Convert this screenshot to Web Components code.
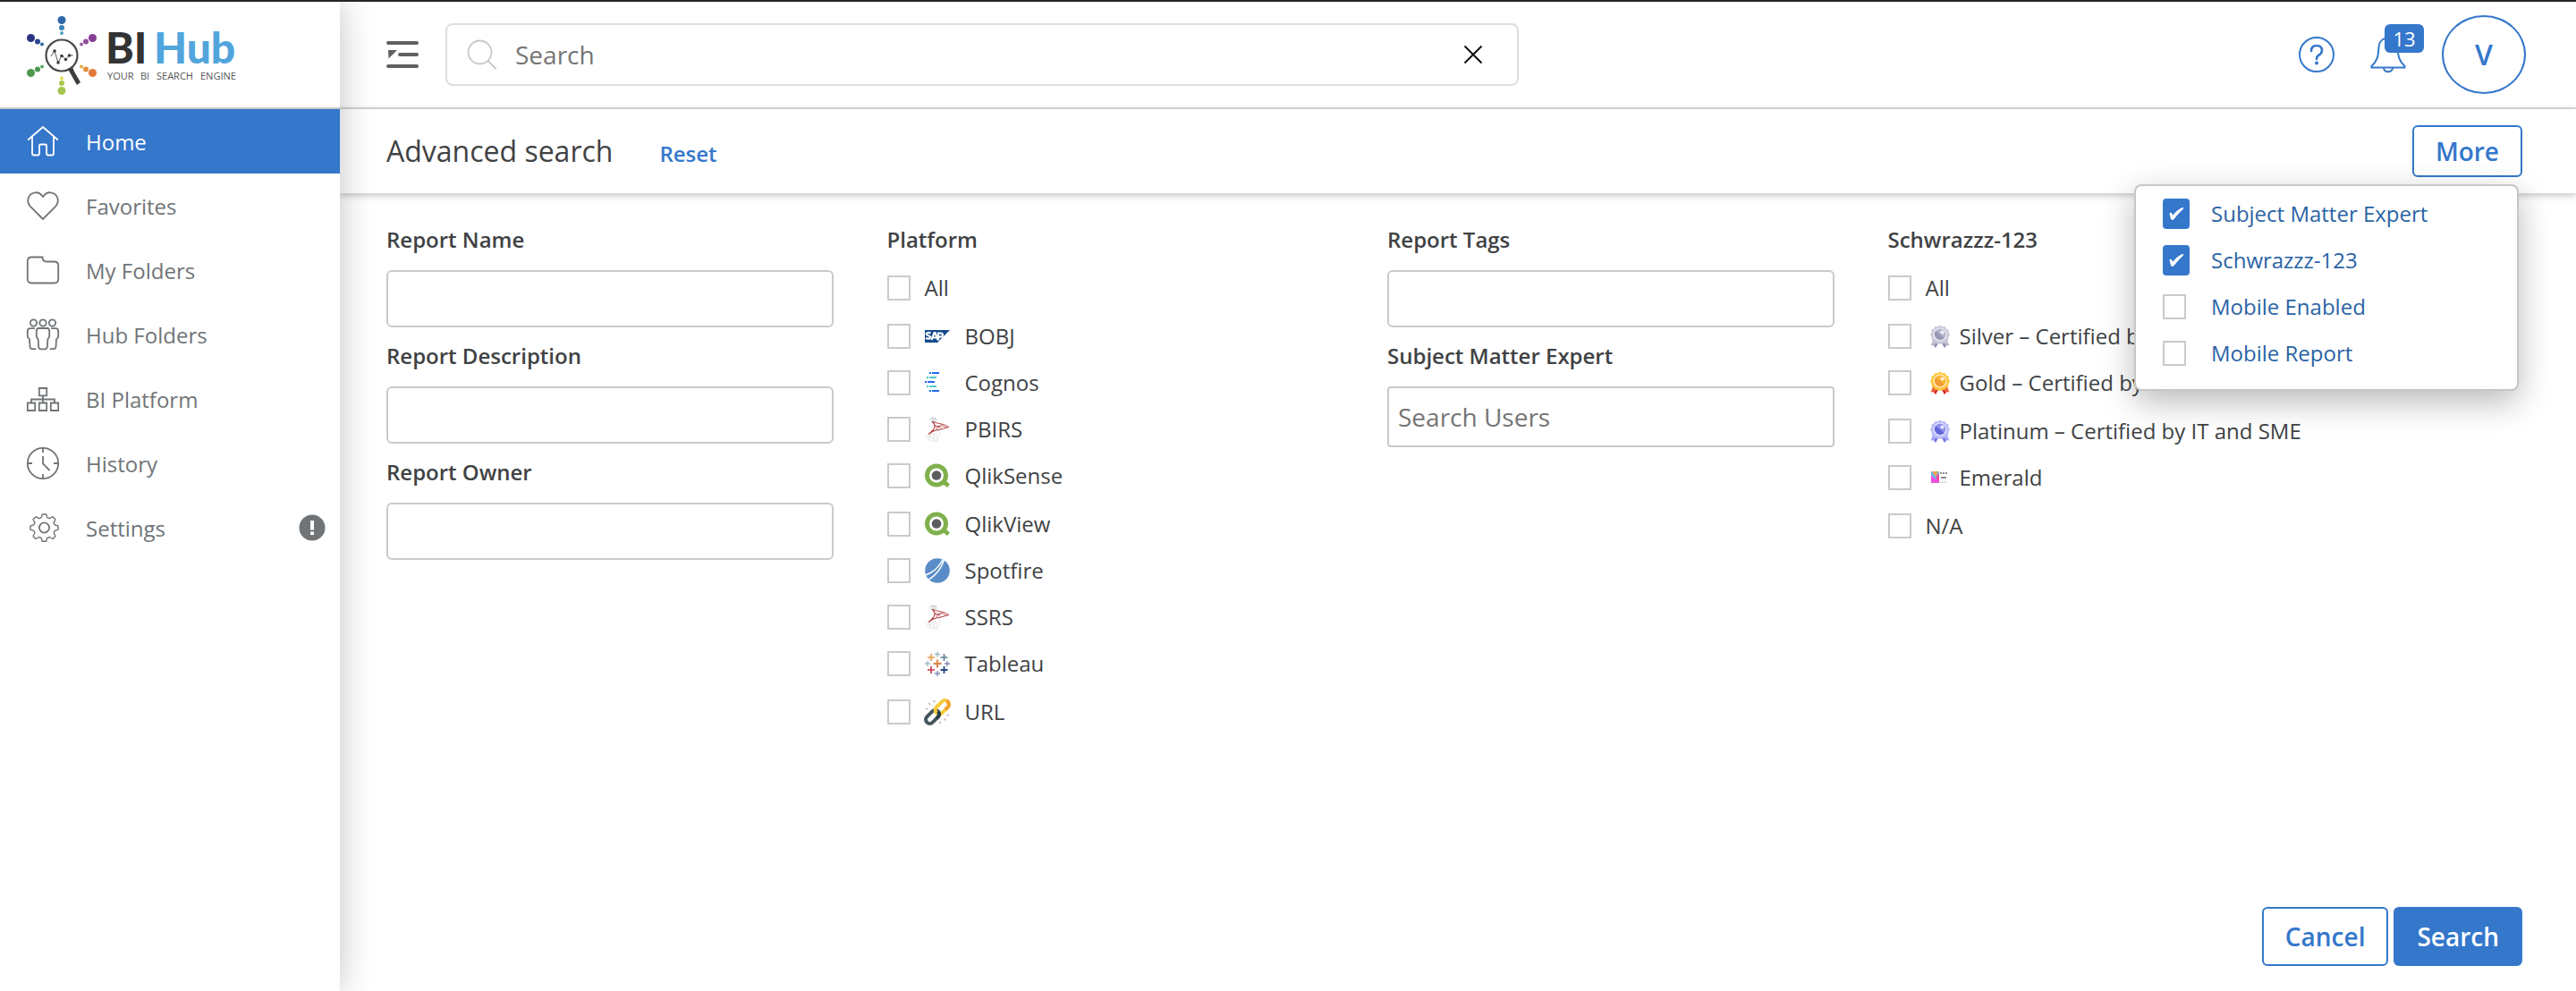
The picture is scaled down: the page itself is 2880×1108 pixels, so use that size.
<!DOCTYPE html>
<html lang="en">
<head>
<meta charset="utf-8">
<meta name="viewport" content="width=device-width, initial-scale=1">
<title>BI Hub</title>
<style>
  :root {
    --blue: #3477cb;
    --link: #2a63a5;
    --ink: #404244;
    --muted: #707477;
    --line: #cacaca;
  }
  body {
    margin: 0;
    background: #fff;
    color: var(--ink);
    font: 24px/32px "Open Sans", "Noto Sans", sans-serif;
  }
</style>
</head>
<body>
<bi-app></bi-app>

<script>
const define = (name, html, setup) => {
  const template = document.createElement('template');
  template.innerHTML = '<style>*,:host{box-sizing:border-box}:host{display:block}</style>' + html;
  customElements.define(name, class extends HTMLElement {
    constructor() {
      super();
      this.attachShadow({ mode: 'open' }).append(template.content.cloneNode(true));
    }
    connectedCallback() {
      if (setup) setup(this, this.shadowRoot);
    }
  });
};

const medal = (light, mid, dark, ribbon, ribbonDark) => `<svg viewBox="0 0 28 28">
  <path d="M7 16 3.500 24.500l3.200-.3L9 27l4-8zM21 16l3.500 8.500-3.200-.3L19 27l-4-8z" fill="${ribbon}"/>
  <path d="M10 20l-3 4.200L9 27l4-7zM18 20l3 4.200L19 27l-4-7z" fill="${ribbonDark}"/>
  <path d="M14 1.500l2.500 1.700 3-.3 1.300 2.700 2.800 1.200-.1 3 1.500 2.600-1.700 2.500.1 3-2.700 1.300-1.400 2.700-3-.1L14 23l-2.300-1.200-3 .1-1.400-2.700-2.700-1.300.1-3L3 12.400l1.500-2.600-.1-3 2.800-1.200 1.300-2.700 3 .3z" fill="${light}"/>
  <circle cx="14" cy="12" r="7" fill="${mid}" stroke="#fff" stroke-opacity=".8" stroke-width="1.200"/>
  <path d="M9 8a6.300 6.300 0 0 0 9.500 8z" fill="${dark}"/>
  <circle cx="16.500" cy="9.500" r="2" fill="#fff" opacity=".8"/></svg>`;

const ICONS = {
  home: `<svg viewBox="0 0 36 36"><path d="M1.200 16.500 18 2l16.800 14.500M6 13v18.500q0 2 2 2h4q2 0 2-2V23q0-1.500 1.500-1.500h5Q22 21.500 22 23v8.500q0 2 2 2h4q2 0 2-2V13"/></svg>`,
  heart: `<svg viewBox="0 0 36 36"><path d="M18 33 4 19C-1 13.500 1 4 9.500 3.300 13 3 16 5 18 8c2-3 5-5 8.500-4.700C35 4 37 13.500 32 19z"/></svg>`,
  folder: `<svg viewBox="0 0 36 36"><path d="M.8 8q0-4.500 4.500-4.500h12.200q0 5 4.500 5h8.500q4.700 0 4.700 4.500v15q0 4.500-4.500 4.500H5.300Q.8 32.500.8 28z"/></svg>`,
  people: `<svg viewBox="0 0 36 36"><circle cx="7.500" cy="5" r="3.700"/><circle cx="18" cy="5" r="3.700"/><circle cx="28.500" cy="5" r="3.700"/>
    <path d="M13.500 11h9q2.700 0 2.700 3v6q0 2-1.800 3l-.5 8.500q-.3 2.800-2.700 2.800h-4.400q-2.400 0-2.700-2.800l-.5-8.500q-1.800-1-1.800-3v-6q0-3 2.700-3z"/>
    <path d="M9 11.200H4q-3.200 0-3.200 3.300V20q0 2 2.200 3.200l.5 8.300q.3 2.700 2.800 2.700h4M27 11.200h5q3.200 0 3.200 3.300V20q0 2-2.200 3.200l-.5 8.300q-.3 2.700-2.800 2.700h-4"/></svg>`,
  tree: `<svg viewBox="0 0 36 36"><path d="M13.800 6h8.400v8.400h-8.400zM.8 22.500h8.400V31H.8zM13.800 22.500h8.400V31h-8.400zM26.800 22.500h8.400V31h-8.400zM18 14.500v8M5 22.500v-4h26v4"/></svg>`,
  clock: `<svg viewBox="0 0 36 36"><circle cx="18" cy="18" r="17.200"/><path d="M18 1v5M18 30v5M1 18h5M30 18h5M18 10v8.500l7.500 7.500"/></svg>`,
  gear: `<svg viewBox="0 0 36 36"><circle cx="19.500" cy="18" r="5.600"/><path d="M17.300 3h4.400l1 3.600 2.700 1.100 3.600-2 3 3-1.900 3.700 1.100 2.500 3.800 1.100v4.200l-3.800 1.100-1.100 2.500 1.900 3.700-3 3-3.600-2-2.700 1.100-1 3.600h-4.400l-1-3.600-2.700-1.100-3.600 2-3-3 1.900-3.700-1.100-2.500L4 20.200V16l3.800-1.100 1.100-2.500L7 8.700l3-3 3.600 2 2.700-1.100z" stroke-width="1.400" stroke-linejoin="round"/></svg>`,
  alert: `<svg viewBox="0 0 30 30"><circle cx="15" cy="15" r="14.500" fill="#707477" stroke="none"/><path d="M15 7v10.500" stroke="#fff" stroke-width="4"/><path d="M15 19.500v3.500" stroke="#fff" stroke-width="4"/></svg>`,
  collapse: `<svg viewBox="0 0 36 36"><path d="M2 5h32M15 18h19M2 31h32" stroke="#606060" stroke-width="4" stroke-linecap="round"/><path d="M2 13h10l-9.500 9.500z" fill="#606060" stroke="none"/></svg>`,
  search: `<svg viewBox="0 0 34 34"><circle cx="14.500" cy="14.500" r="13" stroke="#c8c8c8"/><path d="M23.500 24l8.500 8.500" stroke="#c8c8c8" stroke-width="2" stroke-linecap="round"/></svg>`,
  close: `<svg viewBox="0 0 22 22"><path d="M1.500 1.500l19 19M20.500 1.500l-19 19" stroke="#111" stroke-width="2"/></svg>`,
  help: `<svg viewBox="0 0 40 40"><circle cx="20" cy="20" r="19" stroke-width="2"/><path d="M14 16q0-6 6-6t6 5.500q0 3-3.500 5.200Q20 22.200 20 25" stroke-width="2.600" stroke-linecap="round"/><circle cx="20" cy="29.500" r="2" fill="currentColor" stroke="none"/></svg>`,
  bell: `<svg viewBox="0 0 40 40"><path d="M20 1.500c-6 0-10 4-10.500 10C9 22 8 27 1.500 33v1.500h37V33C32 27 31 22 30.500 11.500 30 5.500 26 1.500 20 1.500zM15 35c0 5.500 10 5.500 10 0" stroke-width="2"/></svg>`,
  sap: `<svg viewBox="0 0 28 28"><path d="M0 7h28L14 21H0z" fill="#15498c"/><path d="M6.500 10.500c-2-1-4.800-.6-4.800 1s4.300 1.300 4.300 3.400-3 2.200-5 .9" stroke="#fff" stroke-width="2.200" fill="none"/><path d="M7.500 18l3-8h1l3 8M9 15.500h4" stroke="#fff" stroke-width="2.200" fill="none"/><path d="M15 18.500v-8h2.500c3.300 0 3.300 4.200 0 4.200h-2" stroke="#fff" stroke-width="2.200" fill="none"/></svg>`,
  cognos: `<svg viewBox="0 0 28 28"><g stroke-width="2"><path d="M5 3h2M8 3h8M0 13h2M3 13h8M5 23h2M8 23h8" stroke="#1f6bf5"/><path d="M2 8h2M5 8h8M2 18h2M5 18h8" stroke="#4fcaca"/></g></svg>`,
  sql: `<svg viewBox="0 0 28 28" fill="none" stroke-linecap="round" stroke-linejoin="round">
    <path d="M6 3l2-2 4 .5 1 3-4 1.500zM8 1l2 4M12 1.500l-4 4" stroke="#b5bdc4" stroke-width=".8"/>
    <path d="M8.500 5.500c4 2 13 2 18.500 6L16 14.500" stroke="#b8494b" stroke-width="1"/>
    <path d="M8.500 5.500c3 3 3 6.500 1 9L4.500 19.500C8 16 12 14.800 16 14.500" stroke="#b03a3c" stroke-width="1.100"/>
    <path d="M10 8l5 4 4-4M11 11l9-1 4 2M13 14l2-4 3 3.500" stroke="#b5484a" stroke-width=".8"/>
    <path d="M3 19.500l-1.500 2.500 3 4 6 1.500 4-1.500 2-6-.5-4.500M4 21l9 5.500M3 23l9-5 2 8M6 20l-1 5.500 9-5.500M10 18v9" stroke="#dfe1e3" stroke-width=".7"/></svg>`,
  qlik: `<svg viewBox="0 0 28 28"><circle cx="13" cy="13.500" r="10.500" fill="none" stroke="#7fb04c" stroke-width="5"/>
    <path d="M19.500 22.500l3.500-3.500 5 4.500-3 3.500z" fill="#7fb04c"/><circle cx="13" cy="13.500" r="5.300" fill="#5c5e60"/></svg>`,
  spotfire: `<svg viewBox="0 0 28 28"><circle cx="14" cy="14" r="13.800" fill="#5a8dc8"/><path d="M1 19C9 16 16 10 20 1.500M4.500 24c8-5 14-13 17-22" stroke="#fff" stroke-width="1.500" fill="none"/></svg>`,
  tableau: `<svg viewBox="0 0 28 28"><path d="M14 9.500v9M9.500 14h9" stroke="#e08348" stroke-width="2"/><path d="M7 3v8M3 7h8" stroke="#e4a04f" stroke-width="1.600"/><path d="M21.500 3v8M17.500 7h8" stroke="#5b7f95" stroke-width="1.600"/><path d="M7 17v8M3 21h8" stroke="#c0394d" stroke-width="1.600"/><path d="M21.500 17v8M17.500 21h8" stroke="#2c4684" stroke-width="1.800"/><path d="M14 .5v6M11 3.500h6M3 11v6M0 14h6" stroke="#9bbac4" stroke-width="1.300"/><path d="M25 11v6M22 14h6M14 22v6M11 25h6" stroke="#8386b1" stroke-width="1.300"/></svg>`,
  link: `<svg viewBox="0 0 28 28" fill="none"><g transform="rotate(-45 14 14)"><rect x="12.500" y="9.500" width="18" height="9" rx="4.500" stroke="#f9cb3c" stroke-width="4"/><path d="M22 18.500h4a4.500 4.500 0 0 0 4-6" stroke="#f0a02f" stroke-width="4"/><rect x="-2.500" y="9.500" width="17.500" height="9" rx="4.500" stroke="#43565c" stroke-width="4"/><path d="M8 18.500h2.500a4.500 4.500 0 0 0 4.500-4.200" stroke="#2d3e43" stroke-width="4"/><path d="M12.500 14a4.500 4.500 0 0 1 4.500-4.500h4" stroke="#f9cb3c" stroke-width="4"/></g><path d="M10.500 1v2.500M4.500 4l1.500 2M1 10l2.500 1M17 24.500V27M22 21.500l1.500 2M24.500 17l2.500 1" stroke="#cbb6b6"/></svg>`,
  silver: medal('#c9c9dc', '#b4b4ca', '#9696b2', '#bcbcd2', '#9595b2'),
  gold: medal('#fbc63c', '#f9b632', '#f29a35', '#f0633a', '#d9302e'),
  platinum: medal('#b7baf6', '#8f93ee', '#6165dc', '#a4a7f4', '#777ce6'),
  emerald: `<svg viewBox="0 0 28 28"><path d="M4 7h9v13H4z" fill="#f04fe0"/><path d="M4 7h9v5l-4 4-5-5z" fill="#6bb8f0"/><path d="M5 7l4 6 3-6z" fill="#f0a64a"/><path d="M9 13l4-4v11z" fill="#ef4f9a"/><path d="M14 9h2M17 9h2M20 9h2M15 14h6" stroke="#8b898f" stroke-width="2"/><path d="M14 19h8" stroke="#e4e2e6" stroke-width="2"/></svg>`,
};

/* <bi-icon name size> draws one inline SVG in a square box. */
define('bi-icon', `<style>
  :host { flex: none; width: 36px; height: 36px; }
  svg { display: block; width: 100%; height: 100%; fill: none; stroke: currentColor; stroke-width: 1.800; overflow: visible; }
  .filled svg { stroke: none; }
  #art { height: 100%; }
</style><div id="art"></div>`, (host, root) => {
  const art = root.getElementById('art');
  art.innerHTML = ICONS[host.getAttribute('name')] || '';
  if (host.hasAttribute('size')) host.style.width = host.style.height = host.getAttribute('size') + 'px';
  art.classList.toggle('filled', host.hasAttribute('filled'));
});

define('bi-logo', `<style>
  a { display: block; }
  svg { display: block; width: 234px; height: 88px; }
</style>
<a href="#" aria-label="BI Hub home"><svg viewBox="0 2 234 88">
  <circle cx="39" cy="6.500" r="4.500" fill="#3267a8"/><circle cx="39" cy="15" r="3" fill="#3b82b8"/><circle cx="39" cy="21" r="2" fill="#4c9fc4"/>
  <circle cx="4.500" cy="26.500" r="4.500" fill="#2b3480"/><circle cx="12" cy="30.500" r="3" fill="#2b4590"/><circle cx="17" cy="33.500" r="2" fill="#3268a8"/>
  <circle cx="73.500" cy="26.500" r="4.500" fill="#853c93"/><circle cx="66" cy="30.500" r="3" fill="#8f4d9a"/><circle cx="61" cy="33.500" r="2" fill="#9b5ca4"/>
  <circle cx="4.500" cy="65.500" r="4.500" fill="#4f9850"/><circle cx="12" cy="61.500" r="3" fill="#4b9651"/><circle cx="17" cy="58.500" r="2" fill="#5ca665"/>
  <circle cx="73.500" cy="65.500" r="4.500" fill="#e07a3c"/><circle cx="66" cy="61.500" r="3" fill="#e2923c"/><circle cx="61" cy="58.500" r="2" fill="#e4aa3c"/>
  <circle cx="39" cy="85.500" r="4.500" fill="#a5c750"/><circle cx="39" cy="77" r="3" fill="#a8c94d"/><circle cx="39" cy="71.500" r="2" fill="#dede45"/>
  <circle cx="39" cy="46" r="17.500" fill="#fff" stroke="#4a4a4a" stroke-width="2.200"/>
  <path d="M27 47l4-6 4 13 4-8 4.500 4.500 4-4.500h4" fill="none" stroke="#555" stroke-width="1"/>
  <g fill="#3c3c3c"><circle cx="31" cy="41" r="1.800"/><circle cx="35" cy="54" r="1.800"/><circle cx="39" cy="46.500" r="1.800"/><circle cx="43.500" cy="50.500" r="1.800"/><circle cx="47.500" cy="46" r="1.800"/></g>
  <path d="M46 61l5-2 2 5 7 12-4 3-8-14z" fill="#3c3c3c"/>
  <g font-family="Lato, sans-serif" font-weight="900" font-size="48">
    <text x="88" y="55" fill="#333">BI</text>
    <text x="142" y="55" fill="#51a5dc">Hub</text>
  </g>
  <g font-family="Open Sans, sans-serif" font-weight="500" font-size="11" fill="#555">
    <text x="90" y="73">YOUR</text><text x="127" y="73">BI</text><text x="145" y="73">SEARCH</text><text x="194" y="73">ENGINE</text>
  </g>
</svg></a>`);

define('nav-item', `<style>
  a { display: flex; align-items: center; gap: 30px; height: 72px; padding: 0 16px 0 30px; color: var(--muted); text-decoration: none; }
  a.active { background: var(--blue); color: #fff; }
  .label { flex: 1; padding-top: 2px; }
</style>
<a href="#"><bi-icon></bi-icon><span class="label"><slot></slot></span><slot name="badge"></slot></a>`, (host, root) => {
  const icon = root.querySelector('bi-icon');
  icon.setAttribute('name', host.getAttribute('icon'));
  icon.connectedCallback();
  if (host.hasAttribute('active')) {
    const a = root.querySelector('a');
    a.className = 'active';
    a.setAttribute('aria-current', 'page');
  }
});

define('side-bar', `<style>
  :host { flex: none; width: 380px; background: #fff; box-shadow: 0 0 36px rgba(0,0,0,.24); position: relative; z-index: 1; }
  header { height: 120px; padding: 16px 30px; border-bottom: 2px solid #c8cacb; }
</style>
<header><bi-logo></bi-logo></header>
<nav aria-label="Main">
  <nav-item icon="home" active>Home</nav-item>
  <nav-item icon="heart">Favorites</nav-item>
  <nav-item icon="folder">My Folders</nav-item>
  <nav-item icon="people">Hub Folders</nav-item>
  <nav-item icon="tree">BI Platform</nav-item>
  <nav-item icon="clock">History</nav-item>
  <nav-item icon="gear">Settings<bi-icon slot="badge" name="alert" size="30"></bi-icon></nav-item>
</nav>`);

define('search-box', `<style>
  :host { flex: 0 1 1200px; }
  form { display: flex; align-items: center; height: 70px; padding: 0 38px 0 22px; border: 2px solid #dedede; border-radius: 8px; }
  input { flex: 1; min-width: 0; padding: 0 0 0 20px; border: 0; outline: 0; background: none; font: inherit; font-size: 28px; color: var(--ink); }
  input::placeholder { color: #757575; opacity: 1; }
  button { padding: 0; border: 0; background: none; }
</style>
<form role="search">
  <bi-icon name="search" size="34"></bi-icon>
  <input type="text" aria-label="Search" placeholder="Search">
  <button type="button" aria-label="Clear"><bi-icon name="close" size="22"></bi-icon></button>
</form>`);

define('top-bar', `<style>
  header { display: flex; align-items: center; height: 120px; padding: 0 56px 0 52px; border-bottom: 2px solid #dedede; }
  button { padding: 0; border: 0; background: none; font: inherit; color: var(--blue); }
  search-box { margin-left: 30px; }
  .tools { display: flex; align-items: center; gap: 40px; margin-left: auto; }
  .bell { position: relative; }
  .count { position: absolute; left: 16px; top: -14px; width: 44px; height: 32px; border-radius: 6px; background: var(--blue); color: #fff; font-size: 22px; line-height: 32px; text-align: center; }
  .avatar { width: 94px; height: 88px; border: 2px solid var(--blue); border-radius: 50%; font-size: 32px; font-weight: 600; }
</style>
<header>
  <button type="button" aria-label="Collapse menu"><bi-icon name="collapse"></bi-icon></button>
  <search-box></search-box>
  <div class="tools">
    <button type="button" aria-label="Help"><bi-icon name="help" size="40"></bi-icon></button>
    <button type="button" class="bell" aria-label="Notifications"><bi-icon name="bell" size="40"></bi-icon><span class="count">13</span></button>
    <button type="button" class="avatar">V</button>
  </div>
</header>`);

define('bi-button', `<style>
  button { display: block; height: var(--button-height, 66px); padding: 0 24px; border: 2px solid var(--blue); border-radius: 6px; background: #fff; color: var(--blue); font: inherit; font-size: 28px; font-weight: 600; }
  :host([primary]) button { background: var(--blue); color: #fff; }
</style><button type="button"><slot></slot></button>`);

define('check-item', `<style>
  label { display: flex; align-items: center; height: 52px; white-space: nowrap; }
  .box { display: grid; flex: none; width: var(--box-slot, 26px); margin-right: var(--box-gap, 16px); align-items: center; justify-items: start; }
  input { grid-area: 1/1; appearance: none; width: 26px; height: 28px; margin: 0; border: 2px solid var(--line); background: #fff; }
  input:checked { width: 30px; height: 34px; border: 0; border-radius: 4px; background: var(--blue); }
  svg { grid-area: 1/1; display: none; width: 30px; height: 34px; pointer-events: none; }
  input:checked + svg { display: block; }
  bi-icon { margin-right: 17px; }
  :host([medal]) bi-icon { margin: 0 8px 0 2px; }
</style>
<label><span class="box"><input type="checkbox"><svg viewBox="0 0 30 34"><path d="M7.500 16.500q2.500-2 3.500 2.200Q16 13 20.500 10.500q3.500-1.500 2.500 1Q17 17 12.500 23q-2 2-3.300 0-1.200-3.500-1.700-6.500z" fill="#fff"/></svg></span><slot></slot></label>`, (host, root) => {
  root.querySelector('input').checked = host.hasAttribute('checked');
  const name = host.getAttribute('icon');
  if (name && !root.querySelector('bi-icon')) {
    const icon = document.createElement('bi-icon');
    icon.setAttribute('name', name);
    icon.setAttribute('size', '28');
    icon.setAttribute('filled', '');
    root.querySelector('slot').before(icon);
  }
});

define('check-group', `<style>
  fieldset { margin: 0; padding: 0; border: 0; min-width: 0; }
  legend { padding: 0; font-weight: 600; margin-bottom: 12px; }
  ::slotted(check-item:nth-child(4n+2)) { margin-top: 2px; }
  :host([loose]) ::slotted(check-item:nth-child(2n)) { margin-top: 2px; }
</style><fieldset><legend></legend><slot></slot></fieldset>`, (host, root) => {
  root.querySelector('legend').textContent = host.getAttribute('heading');
});

define('text-field', `<style>
  :host { margin-bottom: 16px; }
  label { display: block; margin-bottom: 18px; font-weight: 600; }
  input { display: block; width: 100%; height: 64px; padding: 0 10px; border: 2px solid var(--line); border-radius: 6px; outline: 0; background: #fff; font: inherit; font-size: 28px; color: var(--ink); }
  :host([tall]) input { height: 68px; border-radius: 4px; }
  input::placeholder { color: #757575; opacity: 1; }
</style><label for="field"></label><input id="field" type="text">`, (host, root) => {
  root.querySelector('label').textContent = host.getAttribute('label');
  root.querySelector('input').placeholder = host.getAttribute('placeholder') || '';
});

define('more-menu', `<style>
  :host { position: relative; --button-height: 58px; }
  .menu { position: absolute; z-index: 2; right: 4px; top: 66px; width: 430px; padding: 5px 0 14px 30px; border: 2px solid #c6c6c6; border-radius: 8px; background: #fff; color: var(--link); box-shadow: 0 12px 36px rgba(0,0,0,.28); --box-slot: 30px; --box-gap: 24px; }
</style>
<bi-button>More</bi-button>
<div class="menu">
  <check-item checked>Subject Matter Expert</check-item>
  <check-item checked>Schwrazzz-123</check-item>
  <check-item>Mobile Enabled</check-item>
  <check-item>Mobile Report</check-item>
</div>`);

define('page-heading', `<style>
  header { display: flex; align-items: center; justify-content: space-between; height: 94px; padding: 0 60px 0 52px; background: #fff; box-shadow: 0 2px 8px rgba(0,0,0,.26); }
  .title { display: flex; align-items: baseline; gap: 52px; }
  h1 { margin: 0; font-size: 32px; line-height: 44px; font-weight: 400; }
  a { color: var(--blue); font-weight: 600; text-decoration: none; }
</style>
<header><div class="title"><h1>Advanced search</h1><a href="#">Reset</a></div><more-menu></more-menu></header>`);

define('search-form', `<style>
  :host { flex: 1; display: flex; }
  form { flex: 1; display: flex; flex-direction: column; justify-content: space-between; }
  .fields { display: grid; grid-template-columns: repeat(4, minmax(0, 1fr)); gap: 60px; padding: 36px 270px 40px 52px; }
  .actions { display: flex; justify-content: flex-end; gap: 6px; padding: 0 60px 28px; }
</style>
<form>
  <div class="fields">
    <div>
      <text-field label="Report Name"></text-field>
      <text-field label="Report Description"></text-field>
      <text-field label="Report Owner"></text-field>
    </div>
    <check-group heading="Platform">
      <check-item>All</check-item>
      <check-item icon="sap">BOBJ</check-item>
      <check-item icon="cognos">Cognos</check-item>
      <check-item icon="sql">PBIRS</check-item>
      <check-item icon="qlik">QlikSense</check-item>
      <check-item icon="qlik">QlikView</check-item>
      <check-item icon="spotfire">Spotfire</check-item>
      <check-item icon="sql">SSRS</check-item>
      <check-item icon="tableau">Tableau</check-item>
      <check-item icon="link">URL</check-item>
    </check-group>
    <div>
      <text-field label="Report Tags"></text-field>
      <text-field label="Subject Matter Expert" placeholder="Search Users" tall></text-field>
    </div>
    <check-group heading="Schwrazzz-123" loose>
      <check-item>All</check-item>
      <check-item medal icon="silver">Silver – Certified by SME</check-item>
      <check-item medal icon="gold">Gold – Certified by IT</check-item>
      <check-item medal icon="platinum">Platinum – Certified by IT and SME</check-item>
      <check-item medal icon="emerald">Emerald</check-item>
      <check-item>N/A</check-item>
    </check-group>
  </div>
  <div class="actions"><bi-button>Cancel</bi-button><bi-button primary>Search</bi-button></div>
</form>`);

define('bi-app', `<style>
  :host { display: flex; min-height: 100vh; border-top: 2px solid #262425; overflow: hidden; }
  main { flex: 1; min-width: 0; display: flex; flex-direction: column; }
  page-heading { position: relative; }
</style>
<side-bar></side-bar>
<main><top-bar></top-bar><page-heading></page-heading><search-form></search-form></main>`);
</script>
</body>
</html>
